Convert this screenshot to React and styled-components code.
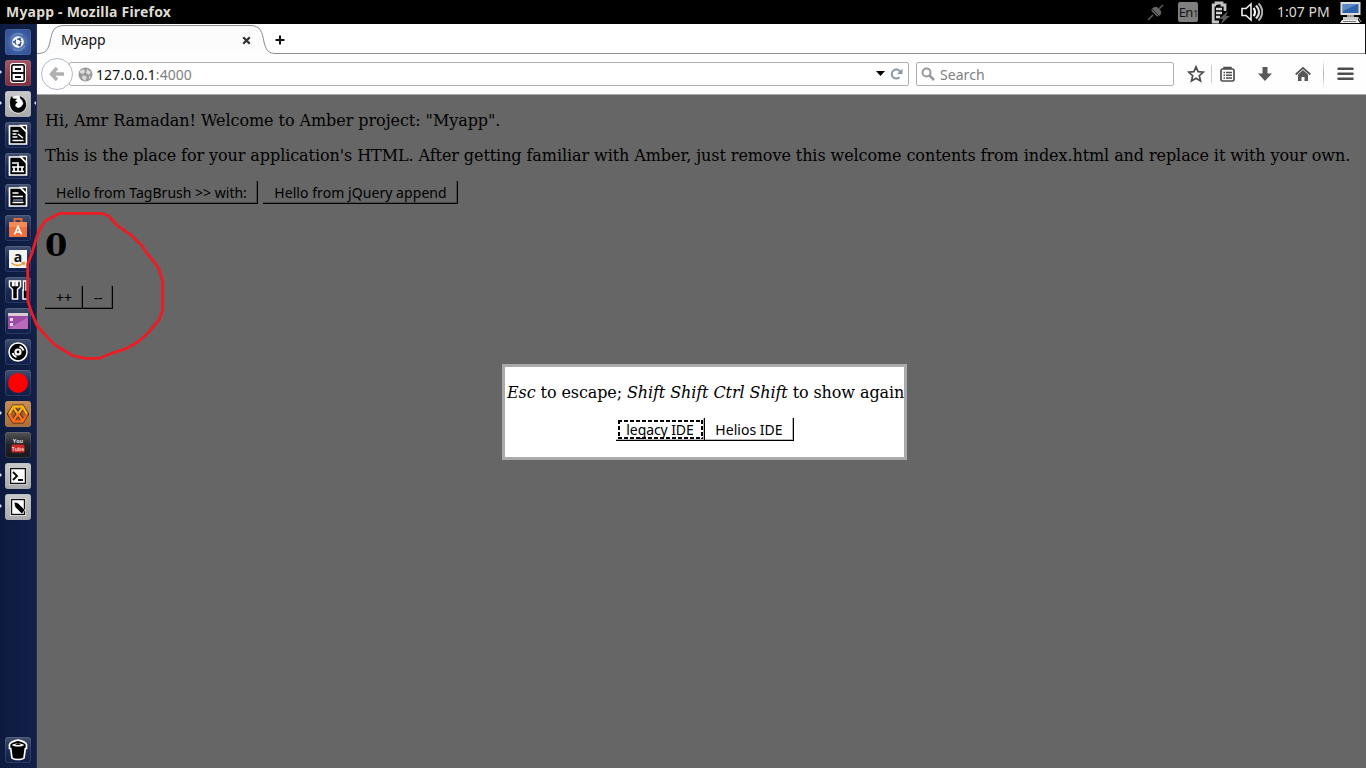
import React from "react";
import styled, { createGlobalStyle, css } from "styled-components";

const Global = createGlobalStyle`
  *, *::before, *::after { box-sizing: border-box; }
  html, body { margin: 0; padding: 0; overflow: hidden; background: #666; }
  svg { display: block; flex: none; }
`;

const ui = css`font-family: "Noto Sans", "Open Sans", sans-serif;`;

const Desktop = styled.div`
  position: relative;
  width: 1366px;
  height: 768px;
  display: flex;
  flex-direction: column;
  overflow: hidden;
  ${ui}
`;

const TopPanel = styled.header`
  height: 24px;
  flex: none;
  display: flex;
  align-items: center;
  background: #000;
  color: #dfdbd2;
  padding: 0 4px 0 6px;
`;

const WindowTitle = styled.div`
  flex: 1;
  font-size: 14px;
  font-weight: 700;
  line-height: 24px;
  letter-spacing: 0.2px;
  white-space: nowrap;
`;

const Status = styled.div`
  display: flex;
  align-items: center;
  height: 24px;
`;

const Indicator = styled.div`
  margin-right: ${(p) => p.$gap}px;
`;

const Language = styled.div`
  width: 20px;
  height: 20px;
  margin-right: 13px;
  border-radius: 2px;
  background: #808080;
  color: #111;
  font-size: 13px;
  line-height: 20px;
  text-align: center;
  letter-spacing: -0.8px;
  white-space: nowrap;
  small { font-size: 8px; margin-left: 1px; }
`;

const Clock = styled.div`
  width: 53px;
  margin-right: 10px;
  font-size: 14px;
  line-height: 24px;
  white-space: nowrap;
`;

const Workspace = styled.div`
  flex: 1;
  display: flex;
  min-height: 0;
`;

const Launcher = styled.nav`
  width: 37px;
  flex: none;
  display: flex;
  flex-direction: column;
  gap: 5px;
  padding: 5px 6px 5px 5px;
  background: linear-gradient(90deg, #0d1a40, #122149);
  border-right: 1px solid #26304a;
`;

const Tile = styled.div`
  position: relative;
  width: 26px;
  height: 26px;
  flex: none;
  border-radius: 3px;
  background: ${(p) => p.$bg || "linear-gradient(#43506f, #1b2b55 50%, #101f49)"};
  box-shadow: inset 0 0 0 1px rgba(150, 165, 200, 0.2), 0 0 1px #060d26;
  &:last-child { margin-top: auto; }
`;

const Pip = styled.i`
  position: absolute;
  top: 10px;
  ${(p) => (p.$right ? "right: -5px;" : "left: -5px;")}
  width: 0;
  height: 0;
  border: 2.5px solid transparent;
  ${(p) => (p.$right ? "border-right-color" : "border-left-color")}: #d8e2f2;
  ${(p) => (p.$right ? "border-left" : "border-right")}: 0;
`;

const Browser = styled.main`
  flex: 1;
  min-width: 0;
  display: flex;
  flex-direction: column;
  background: #fff;
`;

const TabStrip = styled.div`
  position: relative;
  height: 30px;
  flex: none;
  display: flex;
  align-items: center;
  border-right: 1px solid #111;
  padding-left: 24px;
  font-size: 14px;
  color: #111;
`;

const TabShape = styled.svg`
  position: absolute;
  left: 0;
  top: 0;
`;

const TabTitle = styled.span`
  position: relative;
  width: 181px;
  line-height: 30px;
  padding-bottom: 1px;
  height: 30px;
  letter-spacing: -0.05px;
  margin-top: 2px;
`;

const TabGlyph = styled.svg`
  position: relative;
  top: 1px;
  margin-right: ${(p) => p.$gap || 0}px;
`;

const NavBar = styled.div`
  height: 41px;
  flex: none;
  display: flex;
  align-items: center;
  padding: 0 13px 0 4px;
  border-bottom: 1px solid #aaa;
  background: #fefefe;
`;

const BackButton = styled.div`
  position: relative;
  z-index: 1;
  width: 32px;
  height: 32px;
  flex: none;
  display: grid;
  place-items: center;
  border: 1px solid #b3bac2;
  border-radius: 50%;
  background: #fff;
`;

const Field = styled.div`
  height: 24px;
  flex: none;
  display: flex;
  align-items: center;
  border: 1px solid #b0b0b0;
  border-radius: 2px;
  background: #fff;
  font-size: 14px;
  line-height: 22px;
  color: #808080;
`;

const FieldText = styled.span`
  flex: 1;
  padding-top: 2px;
  letter-spacing: 0.06px;
  b { font-weight: 400; color: #111; }
`;

const AddressField = styled(Field)`
  width: 840px;
  margin: 0 7px 0 -4px;
  padding: 0 4px 0 8px;
  gap: 3px;
`;

const SearchField = styled(Field)`
  width: 258px;
  margin-right: 13px;
  padding-left: 4px;
  gap: 5px;
`;

const Divider = styled.div`
  width: 1px;
  flex: none;
  height: ${(p) => p.$tall ? 30 : 18}px;
  margin: 0 ${(p) => p.$after}px 0 ${(p) => p.$before}px;
  background: ${(p) => p.$tall ? "linear-gradient(#fff, #a9b1bc 50%, #fff)" : "#ccc"};
`;

const ToolIcon = styled.svg`
  margin-right: ${(p) => p.$gap || 0}px;
`;

const Page = styled.div`
  flex: 1;
  padding: 16px 8px 0;
  background: #666;
  color: #000;
  font-family: "DejaVu Serif", serif;
  font-size: 16px;
  line-height: 19px;
  white-space: nowrap;
`;

const Paragraph = styled.p`
  margin: 0 0 16px;
  height: 19px;
  letter-spacing: ${(p) => p.$track || -0.08}px;
`;

const ButtonRow = styled.div`
  display: flex;
  gap: ${(p) => p.$gap || 0}px;
  justify-content: ${(p) => (p.$centered ? "center" : "flex-start")};
`;

const dashes = (direction) => `repeating-linear-gradient(${direction}, #000 0 4px, transparent 4px 6px)`;

const Button = styled.button`
  ${ui}
  position: relative;
  width: ${(p) => p.$width}px;
  height: 23px;
  padding: 2px 0 0 1px;
  border: 0;
  border-right: 1px solid #000;
  border-bottom: 1px solid #000;
  box-shadow: inset -1px -1px 0 ${(p) => (p.$light ? "#b8b8b8" : "#4b4b4b")};
  background: transparent;
  color: #000;
  font-size: 14px;
  line-height: 20px;
  letter-spacing: ${(p) => p.$track || 0}px;
  white-space: nowrap;
  ${(p) => p.$focused && css`
    &::after {
      content: "";
      position: absolute;
      inset: 2px 1px 1px 2px;
      background:
        ${dashes("90deg")} top / 100% 2px no-repeat,
        ${dashes("90deg")} bottom / 100% 2px no-repeat,
        ${dashes("180deg")} left / 2px 100% no-repeat,
        ${dashes("180deg")} right / 2px 100% no-repeat;
    }
  `}
`;

const Counter = styled.h1`
  margin: 23px 0 22px;
  height: 37px;
  font-size: 32px;
  line-height: 37px;
  font-weight: 700;
`;

const Dialog = styled.section`
  position: absolute;
  left: 502px;
  top: 364px;
  width: 405px;
  height: 96px;
  padding: 16px 0;
  border: 3px solid #aaa;
  background: #fff;
  color: #000;
  font-family: "DejaVu Serif", serif;
  font-size: 16px;
  line-height: 19px;
  white-space: nowrap;
  ${Paragraph} { padding-left: 2px; }
`;

const Annotation = styled.svg`
  position: absolute;
  left: 0;
  top: 200px;
  pointer-events: none;
`;

const Art = ({ children }) => (
  <svg width="26" height="26" viewBox="0 0 26 26" fill="none">{children}</svg>
);

const OfficeDoc = ({ children }) => (
  <Art>
    <path d="M4.500 4H15.500l6 6v12h-17z" fill="#000" stroke="#fff" strokeWidth="1.700" />
    <path d="M15.500 3.500l6 6v-6z" fill="#000" stroke="#fff" strokeWidth="1.300" />
    {children}
  </Art>
);

const silver = "linear-gradient(#c9c9c9, #a9a9a9)";

const apps = [
  { id: "dash", bg: "radial-gradient(circle at 50% 50%, #7d99ca, #3a5a9f 60%, #2b4a8e)", art: (
    <Art>
      <path d="M6 9a8.500 8.500 0 0112-3M20 17a8.500 8.500 0 01-12 3" stroke="#9fb5dc" strokeOpacity=".6" />
      <circle cx="13" cy="13" r="5.800" fill="#fff" />
      <circle cx="13" cy="13" r="3" stroke="#2d4b91" strokeWidth="1.300" strokeDasharray="5 1.280" />
      <circle cx="9" cy="13" r="1" fill="#2d4b91" /><circle cx="15" cy="9.500" r="1" fill="#2d4b91" /><circle cx="15" cy="16.500" r="1" fill="#2d4b91" />
    </Art>) },
  { id: "files", bg: "linear-gradient(#a55561, #7d2e3c)", left: true, art: (
    <Art>
      <rect x="5" y="3" width="16" height="20" rx="3" fill="#fff" />
      <rect x="6.800" y="4.800" width="12.400" height="16.400" rx="1.600" fill="#fff" stroke="#111" strokeWidth="1.700" />
      <path d="M7 13h12M10 9h6M10 17h6" stroke="#111" strokeWidth="1.800" />
    </Art>) },
  { id: "firefox", bg: silver, left: true, right: true, art: (
    <Art>
      <circle cx="13" cy="13.500" r="9" fill="#fff" />
      <path d="M4.800 9L6 4.500l2.500 2.800 4 .2-2 2.500 2.500 1-2 2-.500 2 2.500 1.700 3-1 2-3-1-3.200-2-2-.5-3L18 6.500c3 2.200 4.200 6.500 3 10-1.200 3.500-4.500 5.500-8 5.500-5 0-9.500-5-8.200-13z" fill="#000" stroke="#fff" strokeWidth=".5" />
    </Art>) },
  { id: "writer", art: <OfficeDoc><path d="M7.500 9h6M7.500 12h4M7.500 15h5M7.500 18.500h11M13 12l5 4" stroke="#fff" strokeWidth="1.600" /></OfficeDoc> },
  { id: "calc", art: <OfficeDoc><path d="M7 10h7M7 18.500h12M9 14v4M13 11v7M17 14v4M7 14h12" stroke="#fff" strokeWidth="1.700" /></OfficeDoc> },
  { id: "impress", art: <OfficeDoc><path d="M7.500 9h6M7.500 12.500h10.500M7.500 18.500h11" stroke="#fff" strokeWidth="1.600" /><path d="M8 15h10v2H8z" fill="#53617f" /></OfficeDoc> },
  { id: "software", art: (
    <Art>
      <path d="M4 7h18v15H4z" fill="#ec7040" /><path d="M4 7h18v5H4z" fill="#f38b58" />
      <path d="M9.500 7V4h7v3" stroke="#df6b34" strokeWidth="2" />
      <path d="M9.500 19.500l3.500-8 3.500 8M10.500 17h5" stroke="#fff" strokeWidth="1.600" />
    </Art>) },
  { id: "amazon", art: (
    <Art>
      <rect x="4" y="4" width="18" height="18" fill="#f4f4f4" />
      <text x="13" y="15.500" textAnchor="middle" fontFamily="Open Sans, sans-serif" fontWeight="700" fontSize="14" fill="#111">a</text>
      <path d="M6.500 17c4 3 8.500 3 12 0M16.500 17l2.800-.3-.6 2.500" stroke="#f19425" strokeWidth="1.500" />
    </Art>) },
  { id: "settings", art: (
    <Art>
      <path d="M4.500 4v5.500l3 3V22h5v-9.500l3-3V4h-3v4.500h-1.500V4H9v4.500H7.500V4z" fill="#000" stroke="#fff" strokeWidth="1.500" />
      <path d="M18.500 4h2.500v9h2v9h-5v-9h.500z" fill="#000" stroke="#fff" strokeWidth="1.500" />
    </Art>) },
  { id: "workspace", art: (
    <Art>
      <rect x="3" y="5" width="20" height="16" fill="#9b4aa6" />
      <path d="M3 21L23 9v12z" fill="#b96abb" /><path d="M3 5h20v3H3z" fill="#d9cbd6" />
      <path d="M5 10h3v3H5zM5 15h3v3H5z" fill="#ead6e9" />
    </Art>) },
  { id: "disc", art: (
    <Art>
      <circle cx="13" cy="13" r="9" fill="#000" stroke="#fff" strokeWidth="1.500" />
      <circle cx="13" cy="13" r="3.600" fill="#fff" /><circle cx="13" cy="13" r="1.400" fill="#000" />
      <path d="M7.500 14a6 6 0 004 4M14.500 7.500a6 6 0 014 4" stroke="#fff" strokeWidth="2" />
    </Art>) },
  { id: "record", art: <Art><circle cx="13" cy="13" r="10" fill="#f00" /></Art> },
  { id: "mixer", bg: "linear-gradient(#c98c55, #aa6c38)", left: true, art: (
    <Art>
      <path d="M8.500 5h9l5 8-5 8h-9l-5-8z" fill="#a85f2c" stroke="#3d2b1d" strokeWidth="3" />
      <path d="M8 6l10 14M18 6L8 20" stroke="#3d2b1d" strokeWidth="4" />
      <path d="M4 13l4.500-7.500h9L22 13" stroke="#ffb51c" strokeWidth="2.400" />
      <path d="M4 13l4.500 7.500h9L22 13" stroke="#ff6a18" strokeWidth="2.400" />
      <path d="M8 6l5 7 5-7" stroke="#ffae1c" strokeWidth="2.400" />
      <path d="M8 20l5-7 5 7" stroke="#ff7518" strokeWidth="2.400" />
    </Art>) },
  { id: "youtube", bg: "linear-gradient(#555, #202329 50%, #17191e)", art: (
    <Art>
      <text x="13" y="11" textAnchor="middle" fontFamily="Open Sans, sans-serif" fontWeight="700" fontSize="5.500" fill="#ddd">You</text>
      <rect x="6.500" y="12.500" width="13" height="8" rx="1.500" fill="#cd2929" />
      <text x="13" y="18.600" textAnchor="middle" fontFamily="Open Sans, sans-serif" fontWeight="700" fontSize="5" fill="#f3c9c9">Tube</text>
    </Art>) },
  { id: "terminal", bg: silver, left: true, art: (
    <Art>
      <rect x="4" y="4" width="18" height="18" rx="1" fill="#fff" />
      <rect x="5.500" y="5.500" width="15" height="15" stroke="#111" strokeWidth="1.500" />
      <path d="M8 9l4 4-4 4M13 17h5" stroke="#111" strokeWidth="2" />
    </Art>) },
  { id: "editor", bg: silver, left: true, art: (
    <Art>
      <rect x="5" y="4" width="16" height="18" fill="#fff" />
      <rect x="6.500" y="5.500" width="13" height="15" stroke="#111" strokeWidth="1.400" />
      <path d="M9 8l4 1 7 7-3 4-7-7z" fill="#000" stroke="#fff" strokeWidth=".6" />
    </Art>) },
  { id: "trash", art: (
    <Art>
      <path d="M4.500 7.500C6 4 10 4 13 3c3 1 7 1 8.500 4.500v4h-1.200L19 21c-2 2-10 2-12 0L5.700 11.500H4.500z" fill="#000" stroke="#fff" strokeWidth="1.700" />
      <path d="M7 8c2-2 10-2 12 0-2 2-10 2-12 0z" fill="#fff" /><path d="M10 8l3-2 3 2z" fill="#111" />
    </Art>) },
];

function StatusArea() {
  return (
    <Status>
      <Indicator $gap={14}>
        <svg width="17" height="18" viewBox="0 0 17 18">
          <path d="M1 17l5-5M12 6l4-4" stroke="#5a5a5a" strokeWidth="1.600" />
          <path d="M4.500 8l5.500 5.500c3.500 0 5-3.500 3.500-6L10 4C6.500 3.500 4 5.500 4.500 8z" fill="#666" /><path d="M5 6l7 7" stroke="#111" strokeWidth=".8" />
        </svg>
      </Indicator>
      <Language>En<small>1</small></Language>
      <Indicator $gap={10}>
        <svg width="20" height="23" viewBox="0 0 20 23" fill="none">
          <path d="M5 4V2h6v2h3v6M8 21H2.200V4H5" stroke="#c4c4c4" strokeWidth="2.800" />
          <path d="M5 8h6M5 12h6M5 16h4" stroke="#d4d4d4" strokeWidth="2.400" />
          <path d="M17 10l-9 8h4l-2 5 9-8h-4l2-5z" fill="#5c5c5c" />
        </svg>
      </Indicator>
      <Indicator $gap={14}>
        <svg width="22" height="20" viewBox="0 0 22 20" fill="none">
          <path d="M1 6.500h4L10 2v16l-5-4.500H1z" stroke="#eee" strokeWidth="1.600" />
          <path d="M12.500 6c2 2 2 6 0 8" stroke="#fff" strokeWidth="2.200" />
          <path d="M15 3.500c4 4 4 9 0 13" stroke="#d8d8d8" strokeWidth="2.400" />
          <path d="M17.500 1.500c5 5 5 12 0 17" stroke="#b5b5b5" strokeWidth="2" />
        </svg>
      </Indicator>
      <Clock>1:07 PM</Clock>
      <svg width="22" height="23" viewBox="0 0 22 23">
        <rect x=".5" y="1" width="20" height="13" fill="#ddd" />
        <rect x="2.500" y="3" width="16" height="9" fill="#2e62aa" /><path d="M3 3h15L3 10z" fill="#5c89c4" />
        <path d="M7 14h7v3H7z" fill="#999" /><rect x="3" y="16" width="15" height="3" fill="#ccc" />
        <path d="M2 19h16l2 3H0z" fill="#eee" /><path d="M3 20.500h13" stroke="#777" /><path d="M18 16l3 5" stroke="#aaa" />
      </svg>
    </Status>
  );
}

export default function App() {
  return (
    <Desktop>
      <Global />
      <TopPanel>
        <WindowTitle>Myapp - Mozilla Firefox</WindowTitle>
        <StatusArea />
      </TopPanel>
      <Workspace>
        <Launcher>
          {apps.map((app) => (
            <Tile key={app.id} $bg={app.bg}>
              {app.left && <Pip />}
              {app.right && <Pip $right />}
              {app.art}
            </Tile>
          ))}
        </Launcher>
        <Browser>
          <TabStrip>
            <TabShape width="1328" height="30" viewBox="0 0 1328 30" fill="none">
              <path d="M0 29.500C9 29.500 11 26 13 18C15 8 16 1.500 27 1.500H213C224 1.500 225 8 227 18C229 26 231 29.500 239 29.500H1328" fill="#fcfcfc" stroke="#8b8b8b" />
            </TabShape>
            <TabTitle>Myapp</TabTitle>
            <TabGlyph width="9" height="9" viewBox="0 0 9 9" $gap={24}>
              <path d="M1.200 1.200l6.600 6.600M7.800 1.200L1.200 7.800" stroke="#333" strokeWidth="2.300" />
            </TabGlyph>
            <TabGlyph width="10" height="10" viewBox="0 0 10 10">
              <path d="M5 .5v9M.5 5h9" stroke="#111" strokeWidth="2" />
            </TabGlyph>
          </TabStrip>
          <NavBar>
            <BackButton>
              <svg width="16" height="16" viewBox="0 0 16 16" fill="none">
                <path d="M8 2L2.500 8 8 14M3 8h12" stroke="#b0b0b0" strokeWidth="3.400" />
              </svg>
            </BackButton>
            <AddressField>
              <svg width="15" height="15" viewBox="0 0 15 15">
                <circle cx="7.500" cy="7.500" r="7" fill="#999" />
                <path d="M2 4l4-2 1 3-2 2-3-1zM9 2l4 3-2 3-3-2zM5 8l4 2-2 4-3-3zM11 9l2 1-2 2z" fill="#ddd" />
              </svg>
              <FieldText><b>127.0.0.1</b>:4000</FieldText>
              <svg width="28" height="14" viewBox="0 0 28 14" fill="none">
                <path d="M0 4h9L4.500 9z" fill="#000" />
                <path d="M23.500 10.200A4.500 4.500 0 1124 4.500" stroke="#8b99a6" strokeWidth="2" />
                <path d="M26.500 1.500V7H21z" fill="#8b99a6" />
              </svg>
            </AddressField>
            <SearchField>
              <svg width="14" height="14" viewBox="0 0 14 14" fill="none">
                <circle cx="5.500" cy="5.500" r="4" stroke="#999" strokeWidth="2" /><path d="M8.500 8.500l4.500 4.500" stroke="#999" strokeWidth="2.500" />
              </svg>
              <FieldText>Search</FieldText>
            </SearchField>
            <ToolIcon width="18" height="18" viewBox="0 0 18 18">
              <path d="M9 1.800l2.100 4.900 5.200.5-4 3.500 1.200 5.200L9 13.200l-4.500 2.700 1.200-5.200-4-3.500 5.200-.5z" fill="#fff" stroke="#4e4e4e" strokeWidth="1.700" />
            </ToolIcon>
            <Divider $before={6} $after={8} />
            <ToolIcon width="15" height="16" viewBox="0 0 15 16" fill="none" $gap={23}>
              <rect x="1" y="3" width="13" height="12" rx="1.500" stroke="#4e4e4e" strokeWidth="1.700" />
              <path d="M4 3V1.500h7V3" fill="#4e4e4e" stroke="#4e4e4e" strokeWidth="1.500" />
              <path d="M3.500 6.500H5M6 6.500h6M3.500 9.200H5M6 9.200h6M3.500 12H5M6 12h6" stroke="#4e4e4e" strokeWidth="1.400" />
            </ToolIcon>
            <ToolIcon width="14" height="16" viewBox="0 0 14 16" $gap={23}>
              <path d="M4.500 1h5v6.500H14L7 15 0 7.500h4.500z" fill="#585858" />
            </ToolIcon>
            <ToolIcon width="16" height="16" viewBox="0 0 16 16">
              <path d="M.7 8.500L8 1.800l7.300 6.700" fill="none" stroke="#4e4e4e" strokeWidth="1.700" />
              <path d="M3 8.500l5-4.500 5 4.500V15H9.500v-4h-3v4H3z" fill="#585858" />
            </ToolIcon>
            <Divider $tall $before={12} $after={13} />
            <ToolIcon width="17" height="14" viewBox="0 0 17 14">
              <path d="M1.500 1.800h14M1.500 6.800h14M1.500 11.800h14" stroke="#4e4e4e" strokeWidth="2.500" strokeLinecap="round" />
            </ToolIcon>
          </NavBar>
          <Page>
            <Paragraph $track={-0.06}>Hi, Amr Ramadan! Welcome to Amber project: "Myapp".</Paragraph>
            <Paragraph>This is the place for your application's HTML. After getting familiar with Amber, just remove this welcome contents from index.html and replace it with your own.</Paragraph>
            <ButtonRow $gap={5}>
              <Button $width={213} $track={0.01}>Hello from TagBrush &gt;&gt; with:</Button>
              <Button $width={195} $track={0.06}>Hello from jQuery append</Button>
            </ButtonRow>
            <Counter>0</Counter>
            <ButtonRow>
              <Button $width={38}>++</Button>
              <Button $width={30} $track={-0.5}>--</Button>
            </ButtonRow>
          </Page>
        </Browser>
      </Workspace>
      <Dialog>
        <Paragraph $track={-0.1}><em>Esc</em> to escape; <em>Shift Shift Ctrl Shift</em> to show again</Paragraph>
        <ButtonRow $centered>
          <Button $light $focused $width={89} $track={-0.08}>legacy IDE</Button>
          <Button $light $width={89} $track={0.02}>Helios IDE</Button>
        </ButtonRow>
      </Dialog>
      <Annotation width="180" height="170" viewBox="0 200 180 170" fill="none">
        <path d="M60 213.300H101.500L108.500 215.700 117.500 225.700 130 234.300 141.700 245.300 147.300 254 153.300 260.700 159 269.300 162.500 281V310L159 320 146.700 334.300 137.300 342.300 126.700 348.300 111.700 353.300 99.500 358.300H85L72.700 355.700 55 345 45 335 36.700 325 31 311 27.700 300V264L32 253 35.500 241 39.300 230 45 221 55.500 215.500 60 213.300" stroke="#ed1c24" strokeWidth="2.800" strokeLinejoin="round" />
      </Annotation>
    </Desktop>
  );
}
